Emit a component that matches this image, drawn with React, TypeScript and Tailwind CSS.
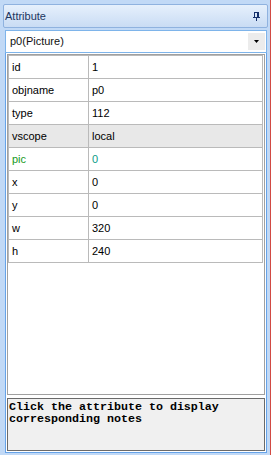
import React from "react"

interface Attr {
  name: string
  value: string
  shaded?: boolean
  link?: boolean
}

const attrs: Attr[] = [
  { name: "id", value: "1" },
  { name: "objname", value: "p0" },
  { name: "type", value: "112" },
  { name: "vscope", value: "local", shaded: true },
  { name: "pic", value: "0", link: true },
  { name: "x", value: "0" },
  { name: "y", value: "0" },
  { name: "w", value: "320" },
  { name: "h", value: "240" },
]

const PinIcon = () => (
  <svg width="7" height="9" viewBox="0 0 7 9" shapeRendering="crispEdges">
    <rect x="1.5" y="0.5" width="4" height="5" fill="none" stroke="#15306b" />
    <rect x="4" y="0" width="1" height="5" fill="#15306b" />
    <rect x="0" y="5" width="7" height="1" fill="#15306b" />
    <rect x="3" y="6" width="1" height="3" fill="#15306b" />
  </svg>
)

const App: React.FC = () => {
  return (
    <div
      className="w-[271px] h-[455px] bg-[#c1d9f6] border-r border-r-[#d24a43] flex flex-col overflow-hidden"
      style={{ fontFamily: '"Liberation Sans", Arial, sans-serif' }}
    >
      {/* title bar */}
      <div className="mt-[4px] ml-[3px] mr-[2px] h-[24px] flex items-center justify-between rounded-[2px] border border-[#8fb2df] bg-linear-to-b from-[#e6f0fc] to-[#c9dcf4] pl-[1px] pr-[7px]">
        <span className="text-[11px] text-[#1c3560]">Attribute</span>
        <PinIcon />
      </div>

      {/* object selector */}
      <div className="mt-[2px] ml-[5px] w-[262px] h-[23px] border border-[#7eb4ea] bg-white flex items-center justify-between pl-[4px] pr-[1px]">
        <span className="text-[11px] text-[#111]">p0(Picture)</span>
        <div className="w-[17px] h-[17px] bg-[#ececec] flex items-center justify-center">
          <svg width="5" height="3" viewBox="0 0 5 3">
            <path d="M0 0h5L2.5 3z" fill="#000" />
          </svg>
        </div>
      </div>

      {/* property panel */}
      <div className="ml-[5px] w-[262px] h-[400px] border-x border-b border-[#66a3e8] bg-white px-[1px] flex flex-col">
        <div className="h-[341px] mt-[1px] border border-[#a0a0a0] bg-white">
          <div className="w-[255px] border-l border-r border-t border-[#bababa]">
            {attrs.map(a => (
              <div
                key={a.name}
                className={`grid grid-cols-[80px_1fr] h-[23px] border-b border-[#bababa] text-[11px] ${a.shaded ? "bg-[#e8e8e8]" : "bg-white"}`}
              >
                <div className={`flex items-center pl-[3px] border-r border-[#bababa] ${a.link ? "text-[#189a22]" : "text-black"}`}>
                  {a.name}
                </div>
                <div className={`flex items-center pl-[3px] ${a.link ? "text-[#0a9a86]" : "text-black"}`}>
                  {a.value}
                </div>
              </div>
            ))}
          </div>
        </div>

        {/* notes */}
        <div
          className="mt-[3px] h-[53px] border border-[#6a6a6a] bg-[#f0f0f0] pl-[1px] pt-[2px] text-[11.67px] leading-[12px] font-bold text-black"
          style={{ fontFamily: '"Liberation Mono", "Courier New", monospace' }}
        >
          Click the attribute to display corresponding notes
        </div>
      </div>
    </div>
  )
}

export default App
